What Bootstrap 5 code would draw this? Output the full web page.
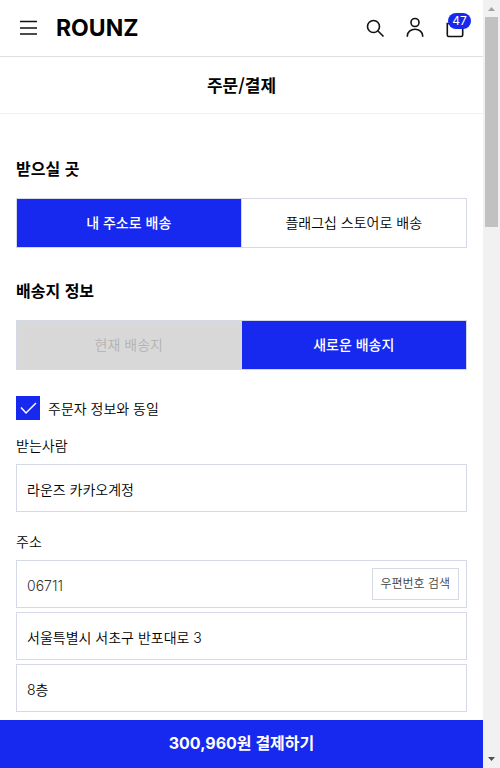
<!DOCTYPE html>
<html lang="ko">
<head>
<meta charset="utf-8">
<meta name="viewport" content="width=device-width, initial-scale=1">
<title>주문/결제 - ROUNZ</title>
<link href="https://cdn.jsdelivr.net/npm/bootstrap@5.3.0/dist/css/bootstrap.min.css" rel="stylesheet">
<style>
:root { --brand: #1729ee; --line: #d5d8e6; }
body { font-family: "Noto Sans CJK KR", sans-serif; font-size: 14px; font-weight: 350; line-height: 20px; color: #000; background: #fff; }
.latin-first { font-family: Inter, "Noto Sans CJK KR", sans-serif; }
.site-header { height: 57px; border-bottom: 1px solid #e0e0e0; padding: 0 16px 0 20px; }
.brand-group { gap: 18px; }
.logo-link { font: 700 23px/28px Inter, sans-serif; color: #000; }
.icon-btn { line-height: 0; color: #111; }
.cart-count { position: absolute; top: -3px; left: 5px; width: 23px; height: 16px; border-radius: 8px; background: var(--brand); font: 400 12px/16px Inter, sans-serif; color: #fff; }
.page-title { font-size: 17px; line-height: 24px; padding: 16px 0; border-bottom: 1px solid #f0f0f0; }
.checkout { padding: 42px 16px 8px; }
.ship-to { margin-bottom: 30px; }
.section-title { font-size: 16px; line-height: 24px; margin-bottom: 18px; }
.choice { border: 1px solid var(--line); height: 50px; }
.choice button { padding: 0 0 2px; font-size: 14px; font-weight: 350; line-height: 20px; background: #fff; color: #000; }
.choice button:first-child { border-right: 1px solid var(--line) !important; }
.choice button.chosen { background: var(--brand); color: #fff; font-weight: 500; }
.choice button:disabled { background: #d8d8d8; color: #b2b2b2; }
.same-row { margin: 26px 0 15px; }
.same-check.form-check-input { width: 24px; height: 24px; margin: 0; border: 0; border-radius: 0; }
.same-check:checked { background-color: var(--brand); background-size: 24px; background-image: url("data:image/svg+xml,%3Csvg xmlns='http://www.w3.org/2000/svg' viewBox='0 0 24 24'%3E%3Cpath d='M5 11.5l5 5.5L20 7' fill='none' stroke='%23fff' stroke-width='1.5'/%3E%3C/svg%3E"); }
.field-label { margin-bottom: 9px; }
.field + .field-label { margin-top: 19px; }
.field, .field:focus { height: 48px; border: 1px solid var(--line); border-radius: 0; padding: 2px 10px 0; font-size: 14px; font-weight: 350; color: #000; box-shadow: none; }
.zip-box { border: 1px solid var(--line); height: 48px; padding-right: 7px; }
.zip-box .field { border: 0; height: 46px; color: #333; }
.zip-btn { flex: none; height: 32px; padding: 0 8px 2px 7px; border: 1px solid var(--line); background: #fff; color: #444; font-size: 12px; font-weight: 350; line-height: 18px; }
.pay-btn { height: 48px; background: var(--brand); color: #fff; font-size: 16px; line-height: 24px; padding: 0 0 2px; }
.scroll-rail { width: 17px; background: #f1f1f1; }
.scroll-grip { width: 13px; height: 210px; background: #c1c1c1; }
</style>
<script src="https://cdn.jsdelivr.net/npm/bootstrap@5.3.0/dist/js/bootstrap.bundle.min.js"></script>
</head>
<body>
<div class="d-flex min-vh-100">
  <div class="d-flex flex-column flex-grow-1">
    <header class="site-header d-flex align-items-center justify-content-between">
      <div class="brand-group d-flex align-items-center">
        <button class="icon-btn border-0 bg-transparent p-0" type="button" aria-label="메뉴">
          <svg width="18" height="16" viewBox="0 0 18 16" stroke="currentColor" stroke-width="1.4"><path d="M0 1.5h17M0 8h17M0 14h17"/></svg>
        </button>
        <a class="logo-link text-decoration-none" href="#">ROUNZ</a>
      </div>
      <div class="d-flex align-items-center gap-3">
        <button class="icon-btn border-0 bg-transparent p-0" type="button" aria-label="검색">
          <svg width="24" height="24" viewBox="0 0 24 24" fill="none" stroke="currentColor" stroke-width="1.6"><circle cx="10.5" cy="10.5" r="6"/><path d="M15 15l5.5 5.5"/></svg>
        </button>
        <button class="icon-btn border-0 bg-transparent p-0" type="button" aria-label="내 정보">
          <svg width="24" height="24" viewBox="0 0 24 24" fill="none" stroke="currentColor" stroke-width="1.6"><circle cx="12" cy="6.5" r="4"/><path d="M4.300 20.800V20a7.700 6.800 0 0 1 15.400 0v.8"/></svg>
        </button>
        <button class="icon-btn position-relative border-0 bg-transparent p-0" type="button" aria-label="장바구니">
          <svg width="24" height="24" viewBox="0 0 24 24" fill="none" stroke="currentColor" stroke-width="1.6"><path d="M4.300 7.500h15.400v11.500q0 1.500-1.500 1.500H5.800q-1.500 0-1.500-1.500z"/></svg>
          <span class="cart-count">47</span>
        </button>
      </div>
    </header>
    <h1 class="page-title text-center fw-bold m-0">주문/결제</h1>

    <main class="checkout flex-grow-1">
      <section class="ship-to">
        <h2 class="section-title fw-bold mt-0">받으실 곳</h2>
        <div class="choice d-flex">
          <button class="chosen border-0 w-50" type="button">내 주소로 배송</button>
          <button class="border-0 w-50" type="button">플래그십 스토어로 배송</button>
        </div>
      </section>
      <section>
        <h2 class="section-title fw-bold mt-0">배송지 정보</h2>
        <div class="choice d-flex">
          <button class="border-0 w-50" type="button" disabled>현재 배송지</button>
          <button class="chosen border-0 w-50" type="button">새로운 배송지</button>
        </div>
        <div class="same-row d-flex align-items-center gap-2">
          <input class="form-check-input same-check" type="checkbox" id="same" checked>
          <label for="same">주문자 정보와 동일</label>
        </div>
        <label class="field-label d-block" for="receiver">받는사람</label>
        <input class="field form-control" id="receiver" type="text" value="라운즈 카카오계정">
        <label class="field-label d-block" for="zip">주소</label>
        <div class="d-flex flex-column gap-1">
          <div class="zip-box d-flex align-items-center">
            <input class="field form-control latin-first" id="zip" type="text" value="06711">
            <button class="zip-btn" type="button">우편번호 검색</button>
          </div>
          <input class="field form-control latin-first" type="text" aria-label="기본 주소" value="서울특별시 서초구 반포대로 3">
          <input class="field form-control latin-first" type="text" aria-label="상세 주소" value="8층">
        </div>
      </section>
    </main>
    <button class="pay-btn latin-first border-0 w-100 fw-bold sticky-bottom" type="button">300,960원 결제하기</button>
  </div>

  <div class="scroll-rail d-flex flex-column align-items-center justify-content-between flex-shrink-0" aria-hidden="true">
    <div class="d-flex flex-column align-items-center">
      <svg width="17" height="17" viewBox="0 0 17 17"><path d="M5 11l3.500-4 3.500 4z" fill="#a3a3a3"/></svg>
      <div class="scroll-grip"></div>
    </div>
    <svg width="17" height="17" viewBox="0 0 17 17"><path d="M5 6l3.500 4L12 6z" fill="#505050"/></svg>
  </div>
</div>
</body>
</html>
